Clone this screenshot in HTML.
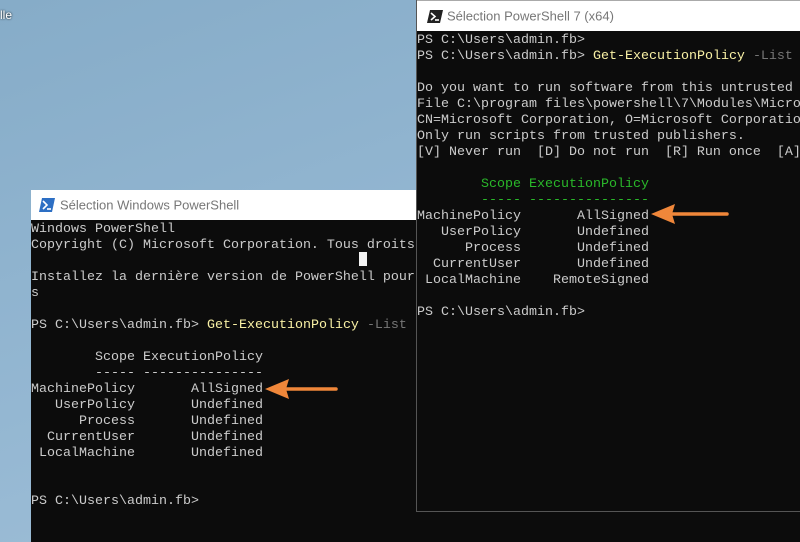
<!DOCTYPE html>
<html><head><meta charset="utf-8"><style>
html,body{margin:0;padding:0;}
body{width:800px;height:542px;overflow:hidden;position:relative;background:linear-gradient(160deg,#86acc8 0%,#94b7d2 50%,#a5c3da 100%);font-family:"Liberation Mono",monospace;}
.desk{position:absolute;left:0;top:8px;color:#fff;font:12px "Liberation Sans",sans-serif;text-shadow:0 0 2px #000;}
.win{position:absolute;background:#0c0c0c;}
.title{position:absolute;left:0;right:0;top:0;background:#fff;color:#777;font:13px "Liberation Sans",sans-serif;}
.title span{position:absolute;top:50%;transform:translateY(-50%);}
.con{position:absolute;white-space:pre;color:#cccccc;font-size:13.33px;line-height:16px;}
.y{color:#f9f1a5}.g{color:#767676}.gr{color:#2ab82a}
.arrow{position:absolute;}
</style></head><body>
<div class="desk">lle</div>

<div class="win" style="left:31px;top:190px;width:769px;height:352px;">
  <div class="title" style="height:30px;">
    <svg style="position:absolute;left:8px;top:8px" width="16" height="14" viewBox="0 0 16 14"><polygon points="3,0 16,0 13,14 0,14" fill="#2d6fc4"/><path d="M4 3 L8 7 L4 11" stroke="#fff" stroke-width="1.6" fill="none"/><path d="M8 11 H12" stroke="#fff" stroke-width="1.6"/></svg>
    <span style="left:29px">Sélection Windows PowerShell</span>
  </div>
  <div class="con" style="left:0;top:32px;">Windows PowerShell
Copyright (C) Microsoft Corporation. Tous droits

Installez la dernière version de PowerShell pour
s

PS C:\Users\admin.fb> <span class="y">Get-ExecutionPolicy</span> <span class="g">-List</span>

        Scope ExecutionPolicy
        ----- ---------------
MachinePolicy       AllSigned
   UserPolicy       Undefined
      Process       Undefined
  CurrentUser       Undefined
 LocalMachine       Undefined


PS C:\Users\admin.fb></div>
  <div style="position:absolute;left:328px;top:62px;width:8px;height:14px;background:#f2f2f2"></div>
</div>

<div class="win" style="left:416px;top:0;width:384px;height:511px;border-left:1px solid #555;border-bottom:1px solid #555;">
  <div class="title" style="height:31px;border-top:1px solid #aaa;box-sizing:border-box;">
    <svg style="position:absolute;left:10px;top:9px" width="16" height="13" viewBox="0 0 16 13"><polygon points="3,0 16,0 13,13 0,13" fill="#222"/><path d="M4 3 L8 6.5 L4 10" stroke="#fff" stroke-width="1.6" fill="none"/><path d="M8 10 H12" stroke="#fff" stroke-width="1.6"/></svg>
    <span style="left:30px">Sélection PowerShell 7 (x64)</span>
  </div>
  <div class="con" style="left:0;top:33px;">PS C:\Users\admin.fb>
PS C:\Users\admin.fb> <span class="y">Get-ExecutionPolicy</span> <span class="g">-List</span>

Do you want to run software from this untrusted
File C:\program files\powershell\7\Modules\Micro
CN=Microsoft Corporation, O=Microsoft Corporatio
Only run scripts from trusted publishers.
[V] Never run  [D] Do not run  [R] Run once  [A]

<span class="gr">        Scope ExecutionPolicy
        ----- ---------------</span>
MachinePolicy       AllSigned
   UserPolicy       Undefined
      Process       Undefined
  CurrentUser       Undefined
 LocalMachine    RemoteSigned

PS C:\Users\admin.fb></div>
</div>

<svg class="arrow" style="left:0;top:0" width="800" height="542">
  <line x1="670" y1="214" x2="727" y2="214" stroke="#f0873a" stroke-width="3.5" stroke-linecap="round"/>
  <polygon points="651,214 675,204 672,214 675,224" fill="#f0873a"/>
  <line x1="285" y1="389" x2="336" y2="389" stroke="#f0873a" stroke-width="3.5" stroke-linecap="round"/>
  <polygon points="265,389 289,379 286,389 289,399" fill="#f0873a"/>
</svg>
</body></html>
